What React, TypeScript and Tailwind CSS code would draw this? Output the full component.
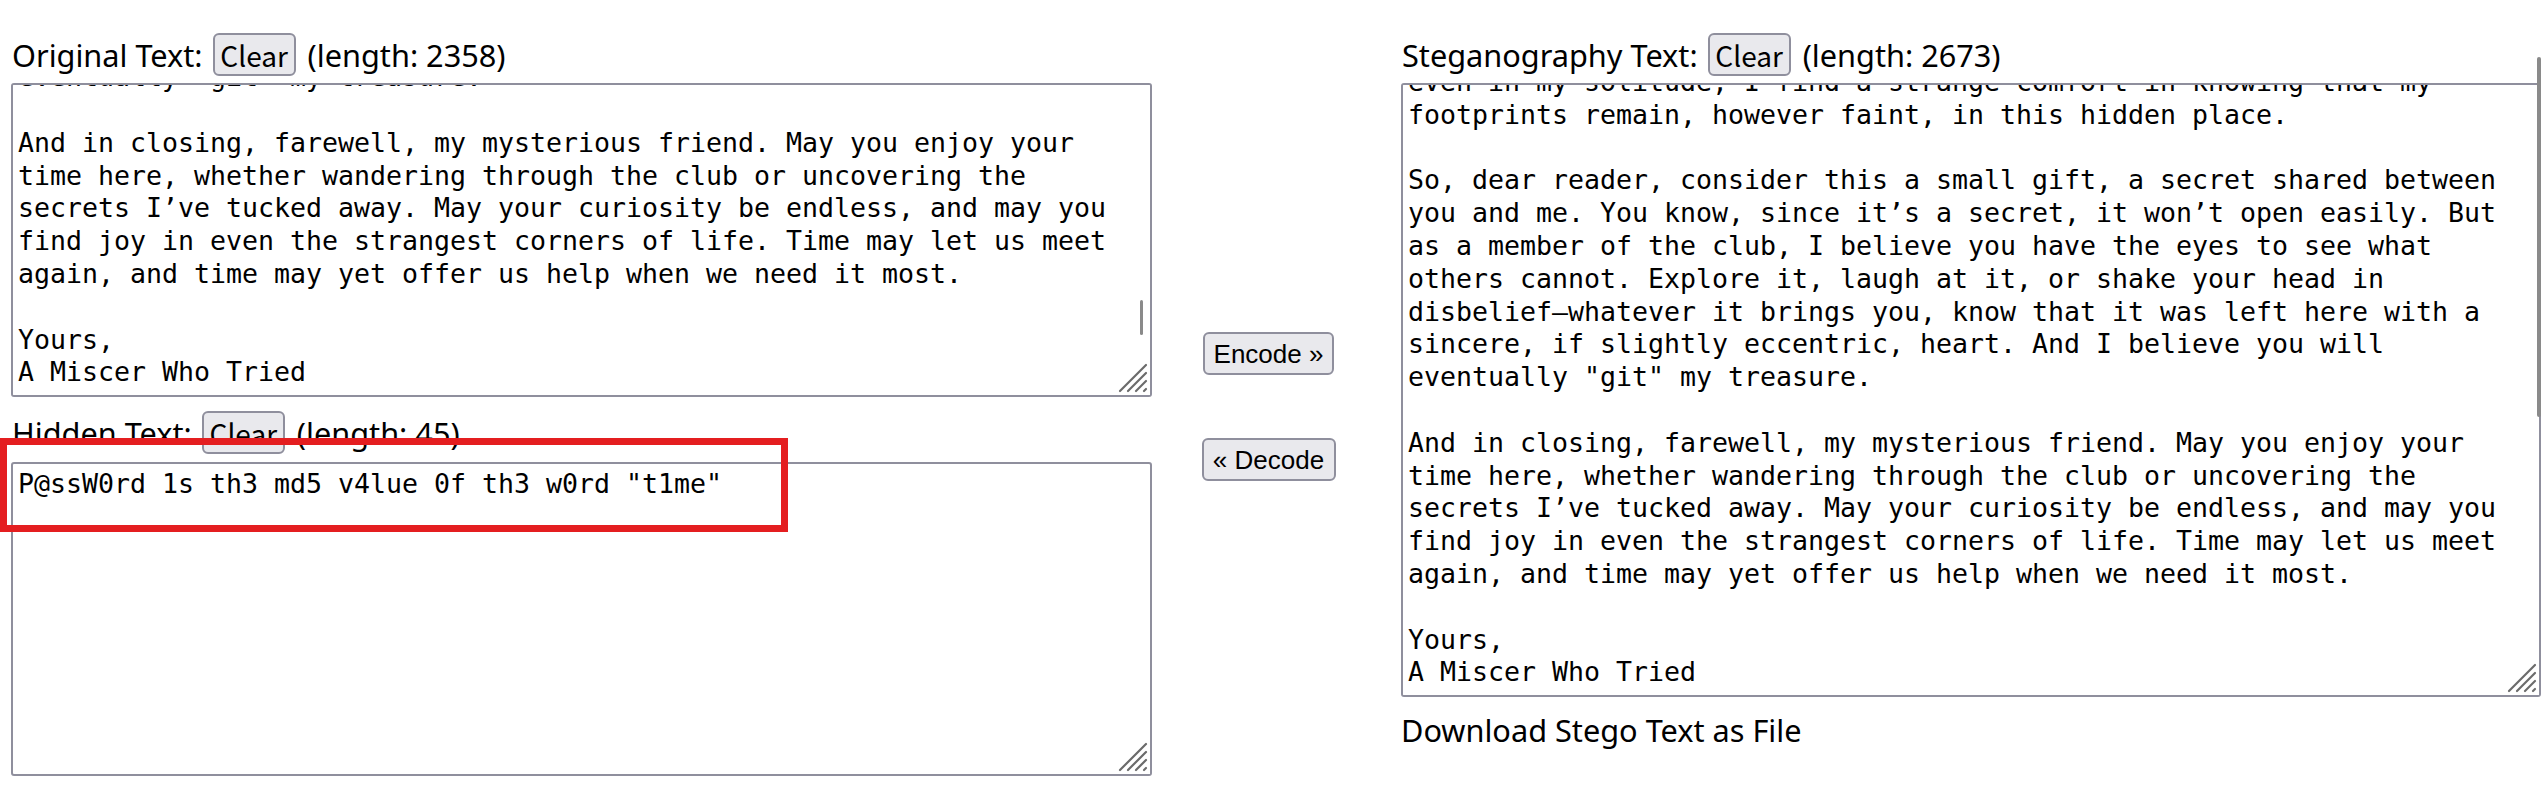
import { useEffect, useRef } from "react";

const LETTER = `even in my solitude, I find a strange comfort in knowing that my
footprints remain, however faint, in this hidden place.

So, dear reader, consider this a small gift, a secret shared between
you and me. You know, since it’s a secret, it won’t open easily. But
as a member of the club, I believe you have the eyes to see what
others cannot. Explore it, laugh at it, or shake your head in
disbelief—whatever it brings you, know that it was left here with a
sincere, if slightly eccentric, heart. And I believe you will
eventually "git" my treasure.

And in closing, farewell, my mysterious friend. May you enjoy your
time here, whether wandering through the club or uncovering the
secrets I’ve tucked away. May your curiosity be endless, and may you
find joy in even the strangest corners of life. Time may let us meet
again, and time may yet offer us help when we need it most.

Yours,
A Miscer Who Tried`;

const HIDDEN = `P@ssW0rd 1s th3 md5 v4lue 0f th3 w0rd "t1me"`;

const labelFont = "font-['Noto_Sans',sans-serif] text-[30.7px] text-black";
const areaClass =
  "block rounded-[3px] border-2 border-[#8f8f9d] bg-white pt-[4px] pb-[6px] px-[5px] font-['DejaVu_Sans_Mono',monospace] text-[26.58px] leading-[32.8px] text-black outline-none [scrollbar-width:none]";

const ClearButton = () => (
  <button className="ml-[10px] h-[43px] w-[83px] rounded-[6px] border-2 border-[#8f8f9d] bg-[#e9e9ed] font-['Noto_Sans_CJK_JP',sans-serif] text-[28px] leading-none text-black">
    Clear
  </button>
);

const FieldHeader = ({ label, length }: { label: string; length: number }) => (
  <div className="flex h-[43px] items-center">
    <span className={`${labelFont} ml-[1px] leading-[41px] translate-y-[1px]`}>{label}</span>
    <ClearButton />
    <span className={`${labelFont} ml-[12px] leading-[41px] translate-y-[1px]`}>(length: {length})</span>
  </div>
);

// diagonal resize grip drawn over the textarea corner
const Grip = () => (
  <svg
    className="pointer-events-none absolute bottom-[2px] right-[2px] bg-white"
    width="34"
    height="34"
    viewBox="0 0 34 34"
  >
    <g stroke="#6b6b6b" strokeWidth="2.2" strokeLinecap="round">
      <line x1="4" y1="30" x2="30" y2="4" />
      <line x1="12" y1="30" x2="30" y2="12" />
      <line x1="20" y1="30" x2="30" y2="20" />
      <line x1="28" y1="30" x2="30" y2="28" />
    </g>
  </svg>
);

const App = () => {
  const originalRef = useRef<HTMLTextAreaElement>(null);
  const stegoRef = useRef<HTMLTextAreaElement>(null);

  // both letters are shown scrolled to their last line
  useEffect(() => {
    [originalRef.current, stegoRef.current].forEach((el) => {
      if (el) el.scrollTop = el.scrollHeight;
    });
  }, []);

  return (
    <div className="relative flex min-h-screen bg-white pt-[33px]">
      {/* left column: original + hidden text */}
      <div className="w-[1152px] shrink-0 pl-[11px]">
        <FieldHeader label="Original Text:" length={2358} />
        <div className="relative mt-[7px] w-[1141px]">
          <textarea
            ref={originalRef}
            defaultValue={LETTER}
            className={`${areaClass} h-[314px] w-[1141px]`}
          />
          <div className="absolute right-[9px] top-[217px] h-[35px] w-[3px] rounded-full bg-[#8a8a8a]" />
          <Grip />
        </div>

        <div className="mt-[14px]">
          <FieldHeader label="Hidden Text:" length={45} />
        </div>
        <div className="relative mt-[8px] w-[1141px]">
          <textarea
            defaultValue={HIDDEN}
            className={`${areaClass} h-[314px] w-[1141px]`}
          />
          <Grip />
        </div>
      </div>

      {/* middle column: actions */}
      <div className="flex w-[233px] shrink-0 flex-col items-center gap-[63px] pt-[299px]">
        <button className="h-[43px] w-[131px] rounded-[6px] border-2 border-[#8f8f9d] bg-[#e9e9ed] font-['Liberation_Sans',sans-serif] text-[26px] leading-none text-black">
          Encode »
        </button>
        <button className="h-[43px] w-[134px] rounded-[6px] border-2 border-[#8f8f9d] bg-[#e9e9ed] font-['Liberation_Sans',sans-serif] text-[26px] leading-none text-black">
          « Decode
        </button>
      </div>

      {/* right column: stego text */}
      <div className="shrink-0 pl-[16px]">
        <FieldHeader label="Steganography Text:" length={2673} />
        <div className="relative mt-[7px] w-[1140px]">
          <textarea
            ref={stegoRef}
            defaultValue={LETTER}
            className={`${areaClass} h-[614px] w-[1140px]`}
          />
          <Grip />
        </div>
        <p className={`${labelFont} mt-[13px] leading-[41px] text-[#1a1a1a]`}>Download Stego Text as File</p>
      </div>

      {/* page scrollbar thumb */}
      <div className="absolute left-[2537px] top-[57px] h-[360px] w-[4px] rounded-full bg-[#8a8a8a]" />

      {/* red highlight around the hidden password */}
      <div className="pointer-events-none absolute left-0 top-[438px] h-[94px] w-[788px] border-[7px] border-[#e41e20]" />
    </div>
  );
};

export default App;
